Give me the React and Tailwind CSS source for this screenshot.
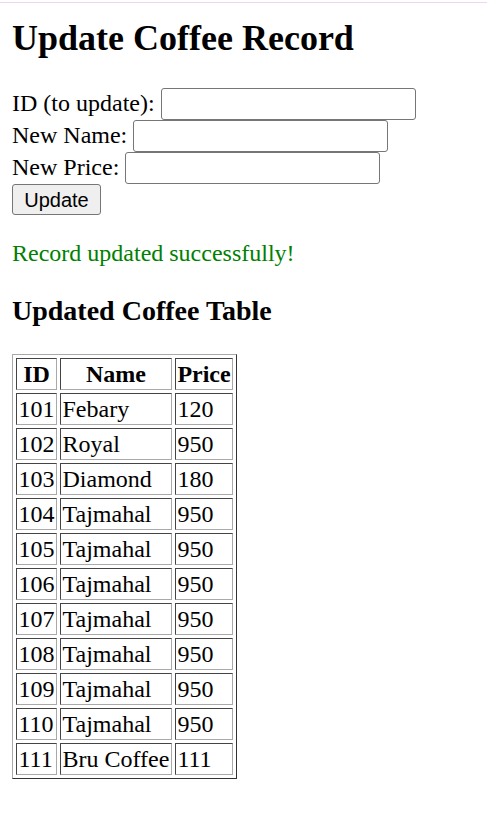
const rows = [
  ['101', 'Febary', '120'],
  ['102', 'Royal', '950'],
  ['103', 'Diamond', '180'],
  ['104', 'Tajmahal', '950'],
  ['105', 'Tajmahal', '950'],
  ['106', 'Tajmahal', '950'],
  ['107', 'Tajmahal', '950'],
  ['108', 'Tajmahal', '950'],
  ['109', 'Tajmahal', '950'],
  ['110', 'Tajmahal', '950'],
  ['111', 'Bru Coffee', '111'],
]

const cell = 'h-[32px] px-[1.5px] py-0 border border-t-[#444] border-l-[#444] border-b-[#a9a9a9] border-r-[#a9a9a9] leading-[28px] whitespace-nowrap'

function Field({ label }) {
  return (
    <div className="flex items-center gap-[6px] h-[32px]">
      <span>{label}</span>
      <input className="w-[255px] h-[32px] border border-[#767676] rounded-[3px] bg-white px-1 text-[20px]" />
    </div>
  )
}

export default function App() {
  return (
    <div className="min-h-screen bg-white text-black text-[24px] leading-[27.6px]" style={{ fontFamily: '"Liberation Serif", "Times New Roman", serif' }}>
      <div className="h-[3px] border-b border-[#efd6ef]" />
      <div className="px-[12px] pt-[15px]">
        <h1 className="text-[36px] leading-[41px] font-bold">Update Coffee Record</h1>

        {/* Form */}
        <form className="mt-[29px]" onSubmit={e => e.preventDefault()}>
          <Field label="ID (to update):" />
          <Field label="New Name:" />
          <Field label="New Price:" />
          <button
            type="submit"
            className="mt-0 w-[89px] h-[31px] border border-[#767676] rounded-[3px] bg-[#efefef] text-[20px] leading-none"
            style={{ fontFamily: '"Liberation Sans", Arial, sans-serif' }}
          >
            Update
          </button>
        </form>

        <p className="mt-[25px] text-[#008000]">Record updated successfully!</p>

        <h3 className="mt-[27px] text-[28px] leading-[32px] font-bold">Updated Coffee Table</h3>

        {/* Table */}
        <table className="mt-[27px] border-separate border-spacing-[3px] border border-t-[#a9a9a9] border-l-[#a9a9a9] border-b-[#333] border-r-[#333]">
          <thead>
            <tr>
              <th className={`${cell} font-bold text-center`}>ID</th>
              <th className={`${cell} font-bold text-center`}>Name</th>
              <th className={`${cell} font-bold text-center`}>Price</th>
            </tr>
          </thead>
          <tbody>
            {rows.map(r => (
              <tr key={r[0]}>
                <td className={`${cell} text-left`}>{r[0]}</td>
                <td className={`${cell} text-left`}>{r[1]}</td>
                <td className={`${cell} text-left`}>{r[2]}</td>
              </tr>
            ))}
          </tbody>
        </table>
      </div>
    </div>
  )
}
